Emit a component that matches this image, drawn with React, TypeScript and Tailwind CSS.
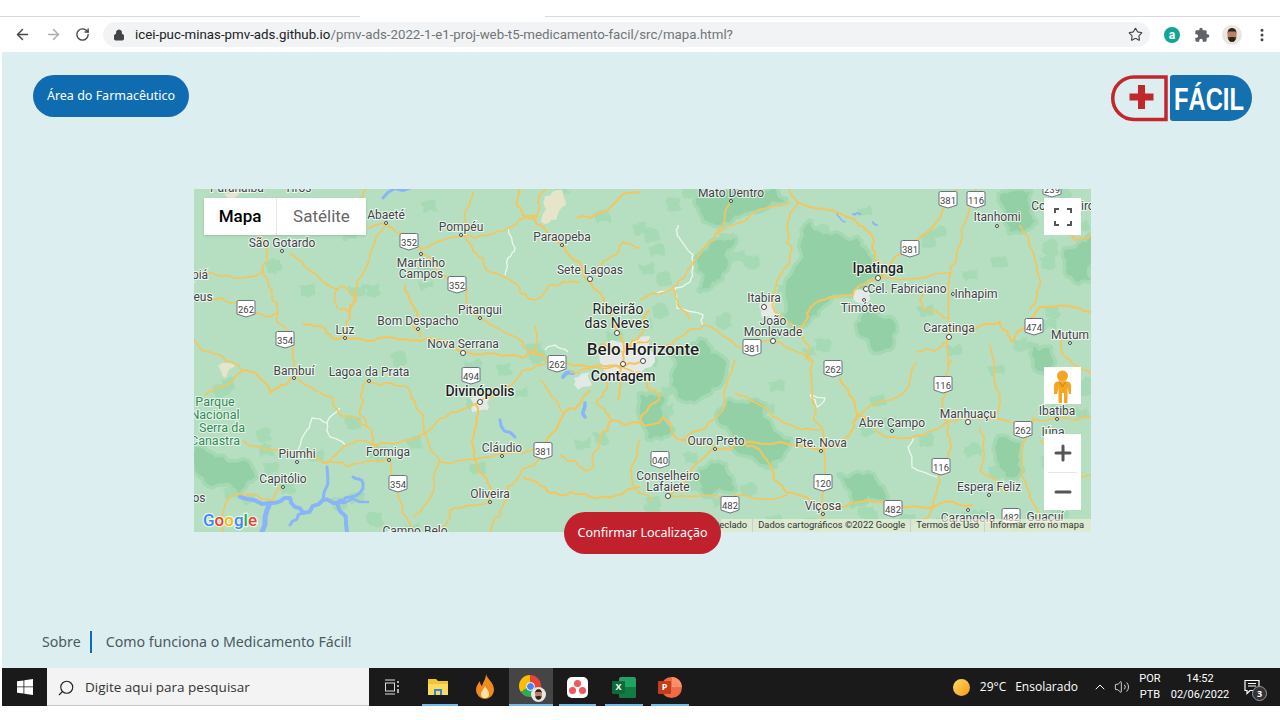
import { ArrowLeft, ArrowRight, ChevronUp, Lock, MoreVertical, Plus, Minus, RotateCw, Search, Star, Volume2 } from "lucide-react";
import type { ReactNode } from "react";

type Pt = [number, number];

const pts = (p: Pt[]) => p.map((q) => q.join(",")).join(" ");

const noise = (a: number, b: number) => {
  const v = Math.sin(a * 12.9898 + b * 78.233) * 43758.5453;
  return v - Math.floor(v);
};

// midpoint displacement, so hand traced lines don't look ruler straight
function rough(p: Pt[], amp: number, rounds: number, closed = false): Pt[] {
  let cur = p;
  let a = amp;
  for (let r = 0; r < rounds; r++) {
    const next: Pt[] = [];
    const n = closed ? cur.length : cur.length - 1;
    for (let i = 0; i < n; i++) {
      const s = cur[i];
      const e = cur[(i + 1) % cur.length];
      const dx = e[0] - s[0];
      const dy = e[1] - s[1];
      const len = Math.hypot(dx, dy) || 1;
      const k = (noise(s[0] + r, s[1] - r) - 0.5) * 2 * Math.min(a, len / 4);
      next.push(s, [Math.round(((s[0] + e[0]) / 2 - (dy / len) * k) * 10) / 10, Math.round(((s[1] + e[1]) / 2 + (dx / len) * k) * 10) / 10]);
    }
    if (!closed) next.push(cur[cur.length - 1]);
    cur = next;
    a /= 1.7;
  }
  return cur;
}

const patches: Pt[][] = [
  [[783, 318], [800, 262], [810, 222], [840, 235], [867, 252], [880, 275], [853, 295], [820, 308], [800, 325]],
  [[697, 262], [720, 240], [735, 238], [728, 262], [715, 282], [700, 290]],
  [[700, 192], [760, 189], [785, 200], [760, 210], [735, 215], [715, 225], [700, 210]],
  [[862, 315], [890, 318], [892, 345], [875, 352], [860, 335]],
  [[668, 350], [700, 340], [726, 362], [720, 385], [690, 400], [672, 385]],
  [[730, 400], [765, 405], [790, 440], [770, 465], [735, 450], [722, 425]],
  [[1003, 437], [1020, 443], [1022, 470], [1007, 477], [997, 460]],
  [[195, 447], [223, 457], [255, 477], [240, 493], [220, 483], [195, 470]],
  [[1065, 250], [1091, 235], [1091, 280], [1068, 275]],
  [[1000, 195], [1030, 192], [1035, 222], [1010, 232]],
  [[640, 395], [665, 400], [672, 430], [648, 438]],
  [[840, 475], [875, 480], [885, 500], [852, 505]],
  [[1030, 345], [1050, 348], [1052, 372], [1035, 368]],
  [[700, 470], [725, 465], [735, 490], [705, 495]],
];

const blobs: Pt[] = Array.from({ length: 120 }, (_, i) => {
  const left = i % 3 === 0;
  return [
    Math.round((left ? 194 + noise(i, 3) * 450 : 640 + noise(i, 7) * 450) * 10) / 10,
    Math.round((189 + noise(i, 11) * 340) * 10) / 10,
  ] as Pt;
});

const roads: Pt[][] = [
  [[262, 235], [268, 260], [263, 270], [272, 298], [278, 312], [290, 332], [293, 352], [298, 375]],
  [[194, 272], [230, 276], [263, 270]],
  [[207, 300], [237, 302], [257, 313], [278, 312]],
  [[303, 323], [330, 335], [345, 337], [390, 337], [430, 338], [467, 352], [523, 358], [547, 358], [600, 365], [640, 362]],
  [[367, 227], [387, 223], [400, 232], [420, 248], [463, 235], [510, 227], [523, 218], [537, 218]],
  [[420, 248], [442, 275], [467, 288], [470, 308], [480, 318], [523, 342], [537, 352]],
  [[462, 235], [483, 258], [490, 272], [503, 277], [520, 292], [540, 298], [560, 285], [580, 282]],
  [[518, 188], [523, 215], [540, 225], [563, 245], [590, 282], [617, 332], [623, 362], [618, 400]],
  [[537, 218], [547, 188]],
  [[367, 188], [365, 225]],
  [[387, 223], [357, 282], [350, 318], [345, 338]],
  [[405, 285], [417, 318], [420, 337]],
  [[290, 253], [333, 288], [353, 292], [350, 315]],
  [[337, 288], [337, 308], [350, 315]],
  [[473, 192], [468, 228]],
  [[577, 218], [603, 212], [640, 192]],
  [[597, 268], [623, 242], [640, 248]],
  [[535, 325], [537, 352]],
  [[297, 377], [333, 397], [340, 415], [367, 427], [380, 450]],
  [[247, 370], [270, 393], [293, 378]],
  [[370, 380], [363, 403], [367, 427]],
  [[370, 383], [410, 390], [423, 420], [440, 460], [423, 507], [413, 517]],
  [[477, 403], [430, 430], [397, 443], [357, 440], [333, 457], [323, 463]],
  [[475, 403], [473, 447], [487, 480], [490, 503]],
  [[440, 462], [480, 458], [523, 453], [543, 451]],
  [[543, 457], [507, 487], [500, 510], [490, 532]],
  [[490, 503], [450, 510], [438, 532]],
  [[590, 390], [567, 410], [543, 450]],
  [[243, 440], [280, 450], [323, 463], [347, 467], [388, 458]],
  [[388, 460], [398, 490], [413, 533]],
  [[282, 487], [273, 500], [230, 497], [223, 532]],
  [[523, 477], [550, 493], [590, 497], [640, 487]],
  [[540, 380], [563, 412]],
  [[477, 403], [520, 375], [547, 362]],
  [[788, 188], [797, 205], [787, 242], [790, 262], [777, 285], [773, 308], [800, 332], [810, 362]],
  [[797, 202], [850, 218], [873, 238], [880, 265]],
  [[730, 202], [717, 232], [697, 258], [673, 288]],
  [[717, 235], [750, 215], [790, 202]],
  [[977, 188], [960, 245], [950, 275], [948, 365]],
  [[957, 188], [917, 240], [880, 278], [853, 295], [810, 308], [800, 328]],
  [[880, 278], [953, 273]],
  [[655, 347], [680, 337], [703, 325], [743, 348], [773, 342], [787, 348], [813, 362]],
  [[640, 300], [673, 288], [690, 320]],
  [[948, 328], [1000, 322], [1013, 342], [1040, 307], [1091, 312]],
  [[917, 352], [948, 342]],
  [[922, 292], [923, 308], [947, 318]],
  [[813, 360], [813, 403], [822, 427], [822, 520]],
  [[840, 377], [857, 413], [847, 437], [822, 450]],
  [[735, 393], [773, 417], [820, 430]],
  [[917, 363], [897, 397], [857, 417], [880, 433], [897, 438], [917, 435], [947, 422], [1013, 423], [1057, 418], [1091, 417]],
  [[952, 360], [942, 400], [948, 423], [948, 453], [937, 487], [923, 520]],
  [[640, 423], [663, 417], [683, 440], [715, 448], [740, 443], [767, 460], [787, 493], [823, 507], [867, 500], [920, 507], [973, 505]],
  [[715, 448], [683, 487], [670, 495]],
  [[668, 495], [723, 497], [787, 495]],
  [[735, 360], [723, 410], [683, 440]],
  [[740, 443], [820, 450]],
  [[1033, 417], [1023, 443], [1030, 493], [1040, 520]],
  [[980, 427], [980, 470], [1007, 493]],
  [[1040, 440], [1060, 470], [1091, 475]],
  [[640, 375], [660, 395], [640, 423]],
  [[640, 440], [632, 480], [652, 500]],
  [[570, 372], [600, 368], [640, 372]],
  [[600, 345], [625, 352], [650, 340]],
  [[650, 310], [640, 335], [628, 350]],
  [[607, 375], [597, 400], [612, 420]],
  [[1060, 330], [1070, 360], [1090, 375]],
  [[990, 345], [1000, 395], [990, 420]],
  [[1050, 215], [1075, 240], [1091, 235]],
  [[1020, 225], [1040, 280], [1030, 310]],
  [[194, 340], [225, 360], [247, 370]],
  [[205, 395], [247, 370]],
  [[600, 440], [612, 420], [640, 423]],
  [[560, 455], [590, 470], [600, 440]],
];

const boundaries: Pt[][] = [
  [[508, 228], [515, 248], [508, 258], [505, 275]],
  [[678, 225], [677, 235], [693, 255], [693, 268], [690, 282], [675, 288], [657, 293]],
  [[675, 288], [677, 308], [703, 315], [703, 325]],
  [[340, 408], [327, 423], [312, 418], [307, 430], [298, 450]],
  [[327, 423], [330, 437], [345, 445]],
  [[810, 395], [825, 398], [817, 407], [810, 395]],
  [[913, 438], [908, 447], [912, 467], [937, 477]],
  [[545, 350], [555, 345], [568, 352]],
];

const water: [Pt[], number][] = [
  [[[240, 497], [270, 503], [290, 498], [303, 513], [323, 500], [337, 503], [347, 532]], 4],
  [[[327, 467], [323, 500]], 3],
  [[[353, 477], [363, 483], [350, 497], [337, 503]], 3],
  [[[270, 503], [262, 532]], 5],
  [[[337, 503], [368, 502]], 2.5],
  [[[303, 513], [290, 525]], 3],
  [[[500, 420], [515, 437]], 3],
  [[[585, 403], [585, 417]], 3.5],
  [[[563, 377], [573, 373]], 4],
  [[[383, 198], [410, 188]], 3],
  [[[837, 212], [845, 222]], 1.5],
  [[[853, 214], [860, 214]], 2],
  [[[873, 222], [877, 225]], 2],
];

// text, x (centre), y (baseline), size, weight
type Label = [string, number, number, number?, number?];
const labels: Label[] = [
  ["Paranaíba", 237, 192], ["Tiros", 298, 192], ["São Gotardo", 282, 247], ["Abaeté", 386, 219], ["Pompéu", 461, 231],
  ["Paraopeba", 562, 241], ["Martinho", 421, 267], ["Campos", 421, 278], ["Sete Lagoas", 590, 274], ["Pitangui", 480, 314],
  ["Bom Despacho", 418, 325], ["Luz", 345, 334], ["Nova Serrana", 463, 348], ["piá", 200, 279], ["eus", 203, 301],
  ["Ribeirão", 618, 314, 14, 400], ["das Neves", 617, 328, 14, 400], ["Belo Horizonte", 643, 355, 17, 500], ["Contagem", 623, 381, 14, 500],
  ["Divinópolis", 480, 396, 14, 500], ["Bambuí", 294, 375], ["Lagoa da Prata", 369, 376], ["Piumhi", 297, 458], ["Formiga", 388, 456],
  ["Cláudio", 502, 452], ["Capitólio", 283, 483], ["Oliveira", 490, 498], ["Campo Belo", 415, 535], ["os", 199, 502],
  ["Mato Dentro", 731, 197], ["Itanhomi", 997, 221], ["Ipatinga", 878, 273, 14, 500], ["Cel. Fabriciano", 907, 293], ["Inhapim", 976, 298],
  ["Timóteo", 863, 312], ["Itabira", 764, 302], ["João", 773, 325], ["Monlevade", 773, 336], ["Caratinga", 949, 332], ["Mutum", 1070, 339],
  ["Conselheiro", 1063, 210], ["Abre Campo", 892, 427], ["Manhuaçu", 968, 418], ["Ibatiba", 1057, 415], ["Iúna", 1053, 436],
  ["Pte. Nova", 821, 447], ["Ouro Preto", 716, 445], ["Conselheiro", 668, 480], ["Lafaiete", 668, 491], ["Viçosa", 823, 510],
  ["Espera Feliz", 989, 491], ["Carangola", 968, 522], ["Guaçuí", 1045, 521],
];

const parkLabels: Label[] = [["Parque", 215, 406], ["Nacional", 215, 419], ["Serra da", 222, 432], ["Canastra", 215, 445]];

const dots: [number, number, number][] = [
  [386, 223, 1.5], [461, 235, 1.5], [562, 245, 1.5], [421, 254, 1.5], [590, 279, 2.5], [480, 318, 1.5], [418, 329, 1.5], [345, 338, 1.5],
  [463, 353, 2.5], [282, 251, 1.5], [617, 333, 2.5], [643, 361, 2.5], [480, 402, 2.5], [294, 378, 1.5], [369, 381, 1.5], [297, 462, 1.5],
  [389, 460, 1.5], [502, 456, 1.5], [283, 487, 1.5], [490, 502, 1.5], [731, 201, 1.5], [997, 226, 1.5], [878, 278, 2.5], [866, 289, 2.5],
  [953, 294, 1.5], [864, 300, 1.5], [764, 307, 2.5], [773, 341, 2.5], [949, 337, 2.5], [1070, 343, 1.5], [892, 431, 1.5], [968, 422, 2.5],
  [1057, 419, 1.5], [821, 451, 1.5], [715, 449, 1.5], [668, 496, 2.5], [823, 514, 1.5], [989, 495, 1.5], [968, 510, 1.5], [1029, 516, 1.5], [623, 364, 2.5],
];

const shields: [string, number, number][] = [
  ["352", 409, 242], ["352", 457, 285], ["262", 246, 309], ["354", 285, 340], ["262", 557, 364], ["494", 471, 376], ["381", 543, 451],
  ["354", 398, 484], ["381", 948, 200], ["116", 976, 200], ["239", 1052, 189], ["381", 910, 249], ["381", 752, 348], ["474", 1034, 327],
  ["262", 833, 369], ["116", 943, 385], ["262", 1023, 430], ["116", 941, 467], ["040", 660, 460], ["120", 823, 483], ["482", 730, 505],
  ["482", 893, 509], ["482", 1011, 517],
];

function Shield({ label, x, y }: { label: string; x: number; y: number }) {
  return (
    <g>
      <path
        d={`M${x - 9} ${y - 7}q0-1.500 1.500-1.500h15q1.500 0 1.500 1.500v12q-4 1.500-9 3q-5-1.500-9-3z`}
        fill="#fff"
        stroke="#6b7280"
        strokeWidth="1"
      />
      <text x={x} y={y + 3.500} textAnchor="middle" fontSize="9.500" fill="#444">
        {label}
      </text>
    </g>
  );
}

function MapCanvas() {
  return (
    <svg viewBox="194 189 897 343" className="absolute inset-0 w-full h-full" style={{ fontFamily: "Roboto, sans-serif" }}>
      <rect x="194" y="189" width="897" height="343" fill="#b5dfc0" />
      {blobs.map((b, i) => (
        <polygon
          key={i}
          points={pts(
            rough(
              [
                [b[0] - 8, b[1] - 4],
                [b[0] + 7, b[1] - 6],
                [b[0] + 9, b[1] + 5],
                [b[0] - 5, b[1] + 7],
              ],
              5,
              2,
              true,
            ),
          )}
          fill="#a6dab5"
        />
      ))}
      {patches.map((p, i) => (
        <polygon key={i} points={pts(rough(p, 9, 3, true))} fill="#93d0a6" stroke="#a4d9b3" strokeWidth="7" strokeLinejoin="round" paintOrder="stroke" />
      ))}
      <polygon points={pts(rough([[545, 196], [562, 190], [566, 205], [556, 220], [541, 222]], 4, 2, true))} fill="#e6e4c9" />
      <polygon points={pts(rough([[612, 340], [650, 336], [655, 362], [640, 378], [612, 380], [600, 362]], 6, 2, true))} fill="#e3e9e4" />
      <polygon points={pts(rough([[574, 378], [590, 372], [592, 385], [578, 390]], 3, 2, true))} fill="#e3e9e4" />
      <polygon points={pts(rough([[470, 398], [490, 396], [488, 410], [472, 412]], 3, 2, true))} fill="#e3e9e4" />
      <polygon points={pts(rough([[760, 303], [775, 303], [778, 318], [762, 318]], 3, 2, true))} fill="#e3e9e4" />
      <polygon points={pts(rough([[855, 290], [870, 288], [868, 302], [856, 302]], 3, 2, true))} fill="#e3e9e4" />
      <polygon points={pts(rough([[224, 194], [240, 190], [232, 205]], 2, 2, true))} fill="#e6e4c9" />
      <polygon points={pts(rough([[218, 366], [236, 364], [226, 378]], 3, 2, true))} fill="#e6e4c9" />
      {water.map(([p, w], i) => (
        <polyline key={i} points={pts(rough(p, 5, 2))} fill="none" stroke="#8ab4f8" strokeWidth={w} strokeLinejoin="round" strokeLinecap="round" />
      ))}
      {boundaries.map((p, i) => (
        <polyline key={i} points={pts(rough(p, 2, 2))} fill="none" stroke="#eef7f0" strokeWidth="1.300" />
      ))}
      {roads.map((p, i) => (
        <polyline key={i} points={pts(rough(p, 5, 3))} fill="none" stroke="#f5c55c" strokeWidth={i % 4 === 3 ? 2 : 1.6} strokeLinejoin="round" />
      ))}
      {shields.map((s, i) => (
        <Shield key={i} label={s[0]} x={s[1]} y={s[2]} />
      ))}
      {dots.map((d, i) => (
        <circle key={i} cx={d[0]} cy={d[1]} r={d[2]} fill="#fff" stroke="#444" strokeWidth="1" />
      ))}
      {labels.map((l, i) => (
        <text
          key={i}
          x={l[1]}
          y={l[2]}
          textAnchor="middle"
          fontSize={l[3] ?? 12}
          fontWeight={l[4] ?? 400}
          fill={l[3] ? "#1f1f1f" : "#3f4347"}
          stroke="#fff"
          strokeWidth="2"
          strokeOpacity="0.75"
          paintOrder="stroke"
        >
          {l[0]}
        </text>
      ))}
      {parkLabels.map((l, i) => (
        <text key={i} x={l[1]} y={l[2]} textAnchor="middle" fontSize="12.500" fill="#2f8a56" stroke="#fff" strokeWidth="2" strokeOpacity="0.7" paintOrder="stroke">
          {l[0]}
        </text>
      ))}
      <text x="203" y="526" fontSize="17" fontWeight="500" stroke="#fff" strokeWidth="2.500" strokeOpacity="0.7" paintOrder="stroke">
        <tspan fill="#4285f4">G</tspan>
        <tspan fill="#ea4335">o</tspan>
        <tspan fill="#fbbc05">o</tspan>
        <tspan fill="#4285f4">g</tspan>
        <tspan fill="#34a853">l</tspan>
        <tspan fill="#ea4335">e</tspan>
      </text>
    </svg>
  );
}

function Pegman() {
  return (
    <svg viewBox="0 0 37 37" className="w-[37px] h-[37px]">
      <circle cx="18.500" cy="9" r="5.500" fill="#f5a623" />
      <path d="M13.500 14.500h10q3.500 .5 3.500 4.500v8h-2.200l-1.300-7v16h-3.500v-10h-2v10h-3.500V20l-1.300 7H10v-8q0-4 3.500-4.500z" fill="#f5a623" />
      <path d="M15 14.500l3.500 5 3.500-5" fill="none" stroke="#d9821a" strokeWidth="1.200" />
    </svg>
  );
}

function Logo() {
  return (
    <svg viewBox="0 0 141 47" className="w-[141px] h-[47px] shrink-0">
      <path d="M55 2H23A21.250 21.250 0 0 0 23 44.500H55z" fill="none" stroke="#c1272d" strokeWidth="3.500" />
      <path d="M27 10h7v8.500h8.500v7H34V34h-7v-8.500h-8.500v-7H27z" fill="#c1272d" />
      <path d="M62 0h56a23 23 0 0 1 0 46H62q-3 0-3-3V3q0-3 3-3z" fill="#1470af" />
      <text x="63" y="35" fontSize="31" fontWeight="700" fill="#fff" textLength="70" lengthAdjust="spacingAndGlyphs" style={{ fontFamily: "'Liberation Sans', sans-serif" }}>
        FÁCIL
      </text>
    </svg>
  );
}

function WindowsLogo() {
  return (
    <svg viewBox="0 0 16 16" className="w-4 h-4" fill="#fff">
      <path d="M0 2.300l6.500-.9v6.100H0zM7.300 1.300L16 0v7.500H7.300zM0 8.300h6.500v6.200L0 13.700zM7.300 8.300H16V16l-8.700-1.200z" />
    </svg>
  );
}

function TaskIcon({ className = "w-[46px]", line, children }: { className?: string; line?: string; children: ReactNode }) {
  return (
    <div className={`relative h-full flex items-center justify-center ${className}`}>
      {children}
      {line && <div className={`absolute bottom-0 h-[2px] bg-[#76b9ed] ${line}`} />}
    </div>
  );
}

function Face({ className }: { className: string }) {
  return (
    <svg viewBox="0 0 20 20" className={className}>
      <circle cx="10" cy="10" r="10" fill="#e9e6e3" />
      <path d="M5.500 9q0-6 4.500-6t4.500 6v3q-1 5-4.500 5t-4.500-5z" fill="#b88465" />
      <path d="M5.500 9q0-6 4.500-6t4.500 6l-1-2.500h-7zM5.800 12q1.500 1 2.200 0h4q1 1 2.200 0-.7 5-4.200 5t-4.200-5z" fill="#2f231c" />
    </svg>
  );
}

function Taskbar() {
  return (
    <div className="ml-[2px] h-[38px] bg-[#1a1a1a] flex items-center text-white" style={{ fontFamily: "'Open Sans', sans-serif" }}>
      <div className="w-[45px] h-full flex items-center justify-center">
        <WindowsLogo />
      </div>
      <div className="w-[322px] h-full bg-[#f3f3f3] border-b border-[#c8c8c8] flex items-center pl-[10px] pt-[2px] gap-[10px] text-[#333] text-[13.500px]">
        <Search className="w-[18px] h-[18px] -scale-x-100 text-[#222]" strokeWidth={1.5} />
        <span>Digite aqui para pesquisar</span>
      </div>
      <div className="flex h-full items-center">
        <TaskIcon>
          <svg viewBox="0 0 16 16" className="w-[16px] h-[16px]" fill="none" stroke="#ddd" strokeWidth="1">
            <path d="M1 1h10M1 15h10" />
            <rect x="1.500" y="4" width="9" height="8" />
            <path d="M14 2v2M14 6v2M14 10v4" strokeWidth="1.500" />
          </svg>
        </TaskIcon>
        <TaskIcon line="left-[7px] right-[3px]">
          <svg viewBox="0 0 22 20" className="w-[22px] h-[20px]">
            <path d="M1 2h8l2 2h10v14H1z" fill="#f4c430" />
            <path d="M1 7h20v11H1z" fill="#ffd95e" />
            <path d="M7 12h8v6H7z" fill="#2b88d8" />
            <path d="M9 14h4v4H9z" fill="#ffd95e" />
          </svg>
        </TaskIcon>
        <TaskIcon className="w-[46px] pl-[2px]">
          <svg viewBox="0 0 20 26" className="w-[20px] h-[26px]">
            <path d="M11 0c1 5 8 8 8 16a9 9 0 0 1-18 0c0-4 2-6 4-9 0 3 1 4 2 5 1-4 4-7 4-12z" fill="#f08a1d" />
            <path d="M10 12c1 3 4 4 4 8a4 4 0 0 1-8 0c0-3 3-5 4-8z" fill="#fde3a7" />
          </svg>
        </TaskIcon>
        <TaskIcon className="ml-[2px] w-[44px] bg-[#454545]" line="left-0 right-0">
          <div className="relative w-[24px] h-[24px]">
            <div className="w-[22px] h-[22px] rounded-full bg-[conic-gradient(#ea4335_0_33%,#34a853_33%_66%,#fbbc05_66%_100%)] flex items-center justify-center">
              <div className="w-[9px] h-[9px] rounded-full bg-[#4285f4] border border-white" />
            </div>
            <Face className="absolute right-[-3px] bottom-[-3px] w-[15px] h-[15px]" />
          </div>
        </TaskIcon>
        <TaskIcon className="w-[48px]" line="left-[6px] right-[5px]">
          <div className="w-[21px] h-[21px] rounded-[5px] bg-white relative">
            <div className="absolute left-[7px] top-[3px] w-[7px] h-[7px] rounded-full bg-[#f0565a]" />
            <div className="absolute left-[2px] top-[10px] w-[7px] h-[7px] rounded-full bg-[#f0565a]" />
            <div className="absolute left-[12px] top-[10px] w-[7px] h-[7px] rounded-full bg-[#f0565a]" />
          </div>
        </TaskIcon>
        <TaskIcon line="left-[4px] right-[4px]">
          <div className="relative w-[24px] h-[21px]">
            <div className="absolute right-0 top-0 w-[17px] h-[21px] bg-[#21a366] rounded-[2px]" />
            <div className="absolute right-0 top-[10px] w-[17px] h-[11px] bg-[#107c41] rounded-b-[2px]" />
            <div className="absolute left-0 top-[4px] w-[13px] h-[13px] bg-[#0e6b38] rounded-[1px] text-[9px] font-bold text-white flex items-center justify-center">X</div>
          </div>
        </TaskIcon>
        <TaskIcon line="left-[4px] right-[4px]">
          <div className="relative w-[24px] h-[21px]">
            <div className="absolute right-0 top-0 w-[21px] h-[21px] rounded-full bg-[#ed6c47]" />
            <div className="absolute right-0 top-0 w-[10px] h-[10px] rounded-tr-full bg-[#ff8f6b]" />
            <div className="absolute left-0 top-[4px] w-[13px] h-[13px] bg-[#c43e1c] rounded-[1px] text-[9px] font-bold text-white flex items-center justify-center">P</div>
          </div>
        </TaskIcon>
      </div>
      <div className="flex-1" />
      <div className="flex items-center h-full">
        <div className="w-[17px] h-[17px] rounded-full bg-gradient-to-br from-[#ffd95e] to-[#f59b00]" />
        <span className="ml-[10px] text-[12px]">29°C</span>
        <span className="ml-[9px] text-[12px]">Ensolarado</span>
        <ChevronUp className="ml-[14px] w-[16px] h-[16px]" strokeWidth={1.5} />
        <Volume2 className="ml-[6px] w-[16px] h-[16px]" strokeWidth={1.2} />
        <div className="ml-[8px] w-[24px] text-[11px] leading-[16px] text-center" style={{ fontFamily: "Roboto, sans-serif" }}>
          <div>POR</div>
          <div>PTB</div>
        </div>
        <div className="ml-[7px] w-[62px] text-[11px] leading-[16px] text-center" style={{ fontFamily: "Roboto, sans-serif" }}>
          <div>14:52</div>
          <div>02/06/2022</div>
        </div>
        <div className="relative w-[49px] h-full flex items-center pl-[13px]">
          <svg viewBox="0 0 16 16" className="w-[16px] h-[16px]" fill="none" stroke="#fff" strokeWidth="1.200">
            <path d="M1 1.500h14v10H6l-3 3v-3H1z" />
            <path d="M4 4.500h8M4 7h8" />
          </svg>
          <div className="absolute left-[21px] top-[18px] w-[15px] h-[15px] rounded-full bg-[#333] border border-[#999] text-[9px] font-bold flex items-center justify-center">3</div>
        </div>
      </div>
    </div>
  );
}

function BrowserBar() {
  return (
    <>
      <div className="h-[17px] flex items-end">
        <div className="w-[360px] h-px bg-[#d8dadf]" />
        <div className="w-[185px]" />
        <div className="flex-1 h-px bg-[#d8dadf]" />
      </div>
      <div className="h-[35px] flex items-center text-[#5f6368]">
        <ArrowLeft className="ml-[14px] w-[17px] h-[17px] text-[#444]" strokeWidth={2} />
        <ArrowRight className="ml-[14px] w-[17px] h-[17px] text-[#aaa]" strokeWidth={2} />
        <RotateCw className="ml-[13px] w-[15px] h-[15px] text-[#444]" strokeWidth={2.2} />
        <div className="ml-[13px] w-[1047px] h-[25px] rounded-full bg-[#f1f3f4] flex items-center pl-[10px] pr-[7px]">
          <Lock className="w-[12px] h-[12px] text-[#444]" fill="#444" strokeWidth={2} />
          <span className="ml-[10px] text-[13.300px] text-[#70757a]" style={{ fontFamily: "Roboto, sans-serif" }}>
            <span className="text-[#202124]">icei-puc-minas-pmv-ads.github.io</span>/pmv-ads-2022-1-e1-proj-web-t5-medicamento-facil/src/mapa.html?
          </span>
          <Star className="ml-auto w-[15px] h-[15px] text-[#444]" strokeWidth={1.8} />
        </div>
        <div className="ml-[14px] w-[16px] h-[16px] rounded-full bg-[#12a594] text-white text-[12px] font-bold leading-none flex items-center justify-center" style={{ fontFamily: "Roboto, sans-serif" }}>
          a
        </div>
        <svg viewBox="0 0 24 24" className="ml-[14px] w-[16px] h-[16px]" fill="#5f6368">
          <path d="M20.500 11H19V7a2 2 0 0 0-2-2h-4V3.500a2.500 2.500 0 0 0-5 0V5H4a2 2 0 0 0-2 2v3.800h1.500a2.700 2.700 0 0 1 0 5.400H2V20a2 2 0 0 0 2 2h3.800v-1.500a2.700 2.700 0 0 1 5.400 0V22H17a2 2 0 0 0 2-2v-4h1.500a2.500 2.500 0 0 0 0-5z" />
        </svg>
        <Face className="ml-[12px] w-[20px] h-[20px]" />
        <MoreVertical className="ml-[12px] w-[16px] h-[16px] text-[#444]" strokeWidth={2.5} />
      </div>
    </>
  );
}

export default function App() {
  return (
    <div className="w-[1280px] h-[720px] bg-white overflow-hidden flex flex-col">
      <BrowserBar />
      <div className="ml-[2px] h-[616px] bg-[#ddeef1] flex flex-col" style={{ fontFamily: "'Noto Sans', sans-serif" }}>
        <div className="flex items-start justify-between pt-[23px] pl-[31px] pr-[28px]">
          <button className="w-[156px] h-[42px] rounded-[21px] bg-[#0f6cb0] text-white text-[12.500px]">Área do Farmacêutico</button>
          <Logo />
        </div>
        <div className="relative mt-[67px] ml-[192px] w-[897px] h-[343px] overflow-hidden" style={{ fontFamily: "Roboto, sans-serif" }}>
          <MapCanvas />
          <div className="absolute left-[10px] top-[9px] w-[162px] h-[37px] bg-white flex shadow-sm text-[17px]">
            <div className="w-[73px] border-r border-[#e6e6e6] flex items-center justify-center font-medium text-black">Mapa</div>
            <div className="flex-1 flex items-center justify-center text-[#666]">Satélite</div>
          </div>
          <div className="absolute right-[10px] top-[9px] w-[37px] h-[37px] bg-white flex items-center justify-center">
            <svg viewBox="0 0 18 18" className="w-[18px] h-[18px]" fill="none" stroke="#555" strokeWidth="2">
              <path d="M1 5V1h4M13 1h4v4M17 13v4h-4M5 17H1v-4" />
            </svg>
          </div>
          <div className="absolute right-[10px] top-[178px] w-[37px] h-[37px] bg-white">
            <Pegman />
          </div>
          <div className="absolute right-[10px] top-[245px] w-[37px] h-[76px] bg-white flex flex-col items-center text-[#555]">
            <div className="h-[38px] flex items-center justify-center">
              <Plus className="w-[24px] h-[24px]" strokeWidth={3} />
            </div>
            <div className="w-[29px] h-px bg-[#e6e6e6]" />
            <div className="flex-1 flex items-center justify-center">
              <Minus className="w-[24px] h-[24px]" strokeWidth={3} />
            </div>
          </div>
          <div className="absolute right-0 bottom-0 h-[13px] w-[370px] bg-[#f5f1dc]/60 flex items-center justify-end pr-[7px] text-[9.400px] text-[#333] whitespace-nowrap">
            <span className="pr-[5px] border-r border-[#ccc]">Atalhos do teclado</span>
            <span className="px-[5px] border-r border-[#ccc]">Dados cartográficos ©2022 Google</span>
            <span className="px-[5px] border-r border-[#ccc]">Termos de Uso</span>
            <span className="pl-[5px]">Informar erro no mapa</span>
          </div>
        </div>
        <button className="relative -mt-[20px] ml-[562px] w-[157px] h-[42px] rounded-[21px] bg-[#c1212d] text-white text-[12.500px]">Confirmar Localização</button>
        <div className="mt-auto mb-[15px] ml-[40px] flex items-center text-[14.200px] text-[#4a5a60]">
          <span>Sobre</span>
          <div className="ml-[9px] w-[2px] h-[22px] bg-[#0f6cb0]" />
          <span className="ml-[14px]">Como funciona o Medicamento Fácil!</span>
        </div>
      </div>
      <Taskbar />
    </div>
  );
}
